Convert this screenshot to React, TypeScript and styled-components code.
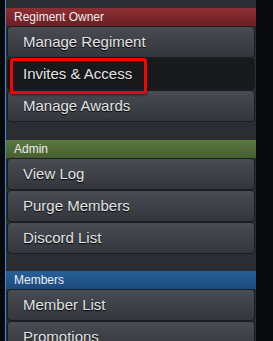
import styled, { createGlobalStyle } from 'styled-components';

const GlobalStyle = createGlobalStyle`
  html, body {
    margin: 0;
    padding: 0;
    background: #07090c;
    font-family: "Liberation Sans", Arial, sans-serif;
  }
`;

const Page = styled.div`
  display: flex;
  height: 341px;
  overflow: hidden;
  padding-left: 5px;
`;

const Sidebar = styled.nav`
  width: 250px;
  border-left: 1px solid #3a8cc8;
  background: #2a2d31;
  padding-top: 8px;
  display: flex;
  flex-direction: column;
  gap: 17.5px;
`;

const Section = styled.section`
  display: flex;
  flex-direction: column;
`;

const tones = {
  red: ['#8e2f34', '#6a1f23'],
  green: ['#5a7840', '#465f2f'],
  blue: ['#27609a', '#1b4a7c'],
};

const Heading = styled.div<{ $tone: keyof typeof tones }>`
  height: 18px;
  line-height: 18px;
  padding-left: 8px;
  font-size: 12px;
  color: #ecedee;
  background: linear-gradient(
    ${({ $tone }) => tones[$tone][0]},
    ${({ $tone }) => tones[$tone][1]}
  );
`;

const Item = styled.a<{ $active?: boolean }>`
  position: relative;
  display: block;
  height: 30px;
  line-height: 30px;
  margin: 0 1px;
  padding-left: 15px;
  border: 1px solid #1b1d20;
  border-radius: 4px;
  font-size: 15px;
  color: #e4e5e7;
  text-shadow: 0 1px 1px #000;
  text-decoration: none;
  background: ${({ $active }) =>
    $active ? '#18191b' : 'linear-gradient(#484c53, #33363b)'};
`;

const Highlight = styled.span`
  position: absolute;
  z-index: 2;
  left: 2px;
  top: -1px;
  width: 131px;
  height: 30px;
  border: 3px solid #ff0000;
  border-radius: 3px;
  box-shadow: 0 1px 3px rgba(0, 0, 0, 0.6);
  pointer-events: none;
`;

const sections = [
  { title: 'Regiment Owner', tone: 'red' as const, items: ['Manage Regiment', 'Invites & Access', 'Manage Awards'] },
  { title: 'Admin', tone: 'green' as const, items: ['View Log', 'Purge Members', 'Discord List'] },
  { title: 'Members', tone: 'blue' as const, items: ['Member List', 'Promotions'] },
];

export default function App() {
  return (
    <>
      <GlobalStyle />
      <Page>
        <Sidebar>
          {sections.map((s) => (
            <Section key={s.title}>
              <Heading $tone={s.tone}>{s.title}</Heading>
              {s.items.map((label) => {
                const active = label === 'Invites & Access';
                return (
                  <Item key={label} $active={active}>
                    {label}
                    {active && <Highlight />}
                  </Item>
                );
              })}
            </Section>
          ))}
        </Sidebar>
      </Page>
    </>
  );
}
